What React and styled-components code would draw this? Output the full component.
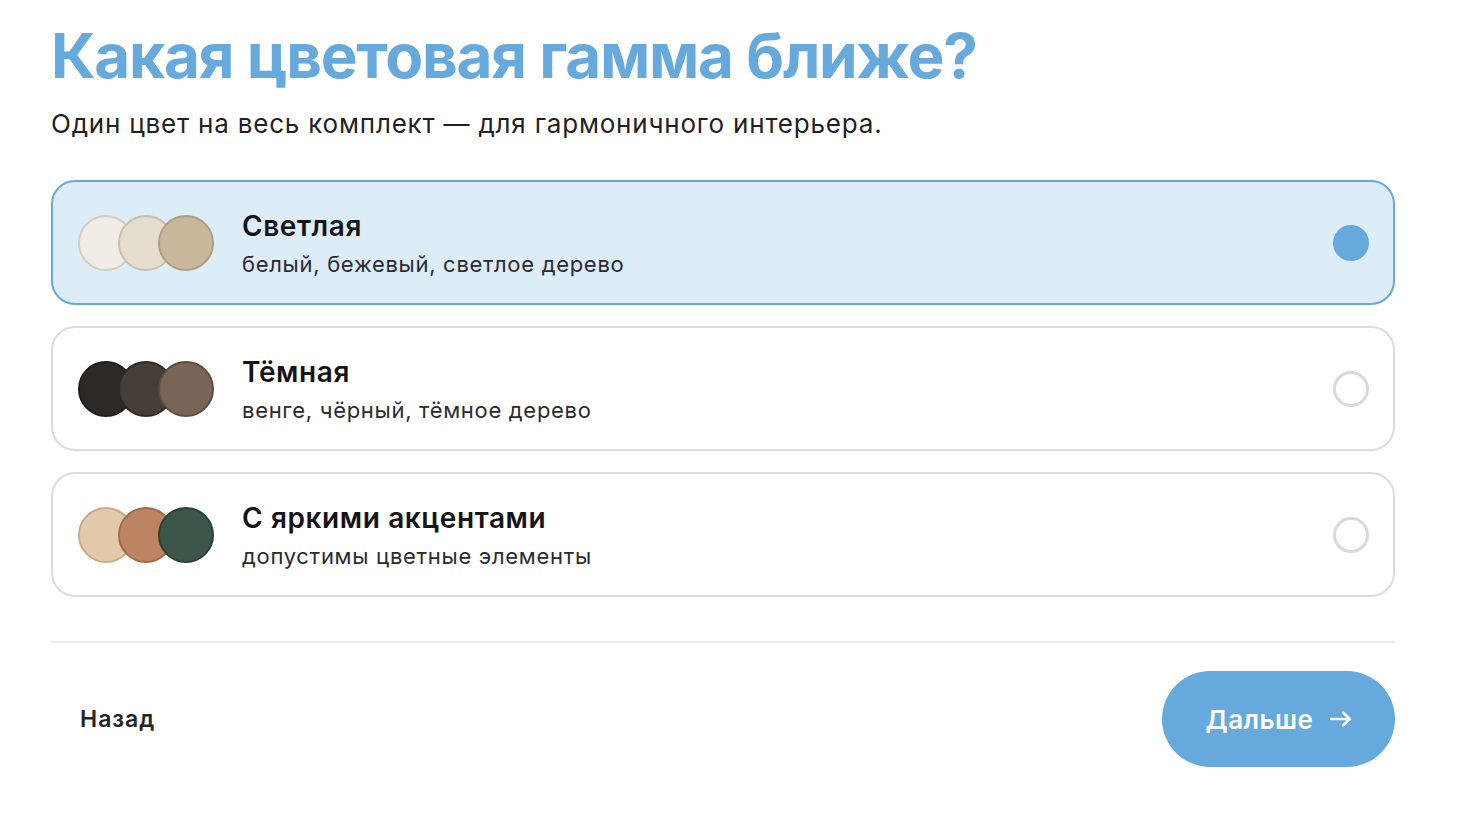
import React, { useState } from 'react';
import styled, { createGlobalStyle } from 'styled-components';

const GlobalStyle = createGlobalStyle`
  body {
    margin: 0;
    background: #ffffff;
    font-family: Inter, "Noto Sans", sans-serif;
    color: #1f1f24;
  }
`;

const Page = styled.div`
  padding: 18px 73px 0 51px;
  display: flex;
  flex-direction: column;
`;

const Title = styled.h1`
  margin: 0;
  font-size: 62px;
  font-weight: 700;
  letter-spacing: -1.25px;
  line-height: 76px;
  color: #66a9dc;
`;

const Desc = styled.p`
  margin: 14px 0 0;
  font-size: 26px;
  line-height: 32px;
  letter-spacing: 0.8px;
  color: #1f1f24;
`;

const Options = styled.div`
  margin-top: 40px;
  display: flex;
  flex-direction: column;
  gap: 21px;
`;

const Option = styled.div`
  display: flex;
  align-items: center;
  height: 125px;
  box-sizing: border-box;
  padding: 0 24px 0 25px;
  border-radius: 24px;
  border: 2px solid ${({ $active }) => ($active ? '#66a9dc' : '#dcdcdc')};
  background: ${({ $active }) => ($active ? '#ddedf8' : '#ffffff')};
  cursor: pointer;
`;

const Swatches = styled.div`
  display: flex;
  width: 136px;
  flex-shrink: 0;
`;

const Swatch = styled.span`
  width: 56px;
  height: 56px;
  box-sizing: border-box;
  border-radius: 50%;
  background: ${({ $color }) => $color};
  border: 2px solid ${({ $edge }) => $edge};
  & + & {
    margin-left: -16px;
  }
`;

const Text = styled.div`
  margin-left: 28px;
  padding-top: 3px;
  flex: 1;
  display: flex;
  flex-direction: column;
  gap: 8px;
`;

const OptionTitle = styled.div`
  font-size: 28px;
  font-weight: 600;
  line-height: 32px;
  letter-spacing: 0.6px;
  color: #141418;
`;

const OptionSub = styled.div`
  font-size: 22px;
  line-height: 29px;
  letter-spacing: 0.7px;
  color: #2a2a30;
`;

const Radio = styled.span`
  width: 36px;
  height: 36px;
  box-sizing: border-box;
  border-radius: 50%;
  border: ${({ $active }) => ($active ? 'none' : '3px solid #d9d9d9')};
  background: ${({ $active }) => ($active ? '#66a9dc' : 'transparent')};
`;

const Divider = styled.hr`
  margin: 44px 0 0;
  border: none;
  height: 2px;
  background: #ebebeb;
`;

const Footer = styled.div`
  margin-top: 28px;
  display: flex;
  align-items: center;
  justify-content: space-between;
`;

const BackButton = styled.button`
  border: none;
  background: none;
  padding: 0 0 0 29px;
  font-family: inherit;
  font-size: 23px;
  font-weight: 600;
  letter-spacing: 1px;
  color: #232328;
  cursor: pointer;
`;

const NextButton = styled.button`
  width: 233px;
  height: 96px;
  border: none;
  border-radius: 48px;
  background: #66a9dc;
  color: #ffffff;
  font-family: inherit;
  font-size: 26px;
  font-weight: 600;
  letter-spacing: 0.5px;
  display: flex;
  align-items: center;
  justify-content: center;
  gap: 16px;
  cursor: pointer;
`;

const options = [
  {
    id: 'light',
    title: 'Светлая',
    sub: 'белый, бежевый, светлое дерево',
    colors: [
      ['#f1ede6', '#d2ccc3'],
      ['#e5ddcd', '#c8bfaf'],
      ['#c9b89c', '#ad9d82'],
    ],
  },
  {
    id: 'dark',
    title: 'Тёмная',
    sub: 'венге, чёрный, тёмное дерево',
    colors: [
      ['#2d2926', '#1f1c1a'],
      ['#463e39', '#2f2926'],
      ['#786558', '#5d4c41'],
    ],
  },
  {
    id: 'accent',
    title: 'С яркими акцентами',
    sub: 'допустимы цветные элементы',
    colors: [
      ['#e4c9a9', '#c6ab8d'],
      ['#bd8463', '#a06a4c'],
      ['#3d5649', '#2c4035'],
    ],
  },
];

const App = () => {
  const [selected, setSelected] = useState('light');
  return (
    <Page>
      <GlobalStyle />
      <Title>Какая цветовая гамма ближе?</Title>
      <Desc>Один цвет на весь комплект — для гармоничного интерьера.</Desc>
      <Options>
        {options.map((o) => (
          <Option key={o.id} $active={selected === o.id} onClick={() => setSelected(o.id)}>
            <Swatches>
              {o.colors.map(([c, e]) => (
                <Swatch key={c} $color={c} $edge={e} />
              ))}
            </Swatches>
            <Text>
              <OptionTitle>{o.title}</OptionTitle>
              <OptionSub>{o.sub}</OptionSub>
            </Text>
            <Radio $active={selected === o.id} />
          </Option>
        ))}
      </Options>
      <Divider />
      <Footer>
        <BackButton>Назад</BackButton>
        <NextButton>
          Дальше
          <svg width="22" height="16" viewBox="0 0 22 16" fill="none">
            <path d="M1 8h19M13 1.5 20 8l-7 6.5" stroke="#fff" strokeWidth="2.4" strokeLinecap="round" strokeLinejoin="round" />
          </svg>
        </NextButton>
      </Footer>
    </Page>
  );
};

export default App;
